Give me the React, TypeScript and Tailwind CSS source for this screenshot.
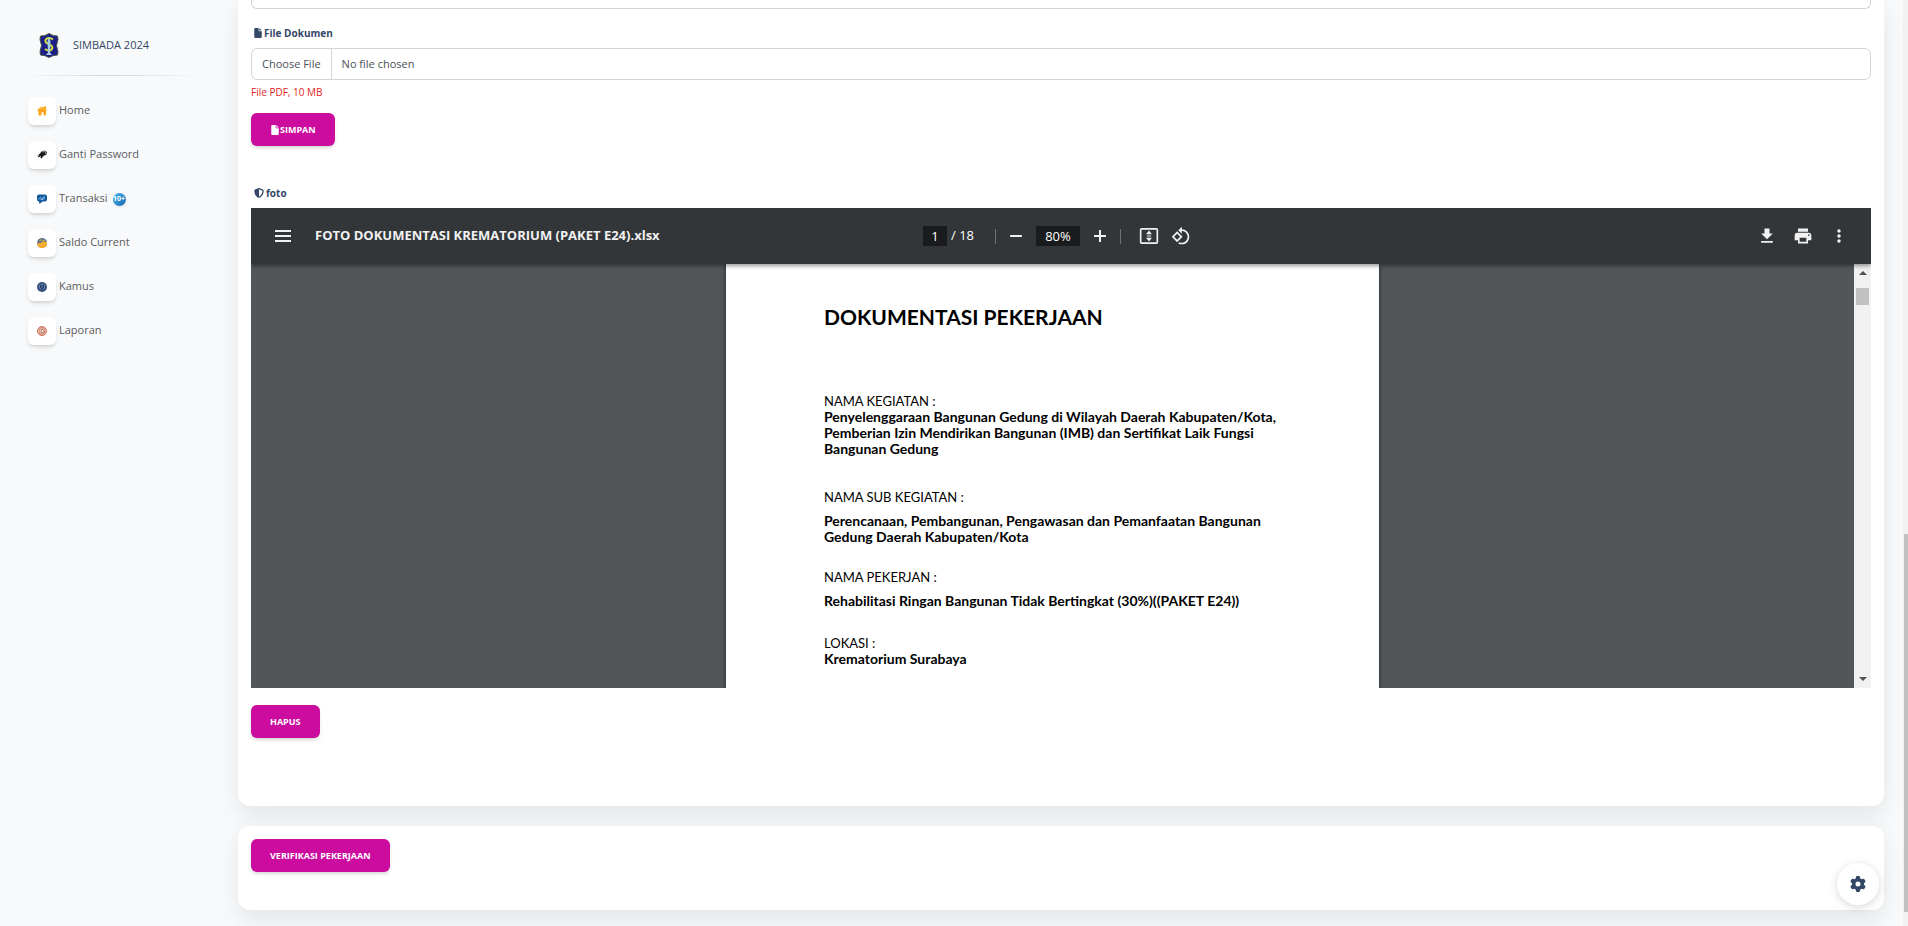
import React from "react";
import { FaFile, FaGear, FaShieldHalved } from "react-icons/fa6";

const HomeIcon = () => (
  <svg viewBox="0 0 20 20" className="size-[10px]" aria-hidden="true">
    <path d="M0 9 7.500 1.500 8.500 2 15 2v-1.500h3v5l2 4h-2v9h-5v-6h-4v6.500H3V11z" fill="#fba31c" />
    <path d="M0 9 7.500 1.500l12 7-11-3.500z" fill="#ffc14d" />
  </svg>
);

const KeyIcon = () => (
  <svg viewBox="0 0 20 20" className="size-[10px]" aria-hidden="true">
    <path d="M0 12 6 7l3-4 7-2 4 4-2 5-4 1-5 6-2-1 1-4-5 3-1-2 3-3z" fill="#1c1c1c" />
    <path d="m11 4 5-1 2 3-2 2" fill="none" stroke="#bbb" strokeWidth="1.500" />
  </svg>
);

const ChatIcon = () => (
  <svg viewBox="0 0 20 20" className="size-[10px]" aria-hidden="true">
    <path d="M4 1h12q4 0 4 4v6q0 4-4 4h-5l-6 5-1-5q-4 0-4-4V5q0-4 4-4z" fill="#155a9f" />
    <path d="m3 11 4-4 3 2 6-4M7 11h5l4-3" fill="none" stroke="#a8d4f5" strokeWidth="1.600" />
  </svg>
);

const BalanceIcon = () => (
  <svg viewBox="0 0 20 20" className="size-[10px]" aria-hidden="true">
    <circle cx="10" cy="10" r="10" fill="#56728c" />
    <path d="M0 9q4 2 7 1l5-3 8 1a10 10 0 0 1-19 6z" fill="#f3ab2e" />
    <path d="m5 7 3-4 3 3 3-2v4" fill="none" stroke="#d9b23c" strokeWidth="2" />
  </svg>
);

const DictionaryIcon = () => (
  <svg viewBox="0 0 20 20" className="size-[10px]" aria-hidden="true">
    <circle cx="10" cy="10" r="10" fill="#33507f" />
    <circle cx="10" cy="9" r="6" fill="#6b86b0" />
    <path d="M7 5v5q0 3 3 3t3-3V5M10 5v11" fill="none" stroke="#243c66" strokeWidth="2" />
  </svg>
);

const ReportIcon = () => (
  <svg viewBox="0 0 20 20" className="size-[10px]" aria-hidden="true">
    <circle cx="10" cy="10" r="9" fill="#ecc0ae" stroke="#cf6f5c" strokeWidth="2" />
    <path d="M6 4h8v12H6z" fill="#f8e6da" stroke="#c06a55" strokeWidth="1.500" />
    <path d="M8 7h4M8 10h2M8 13h4M13 9l2 4" fill="none" stroke="#a7523e" strokeWidth="1.500" />
  </svg>
);

const CityCrest = () => (
  <svg viewBox="0 0 40 50" className="h-[25px] w-5" aria-hidden="true">
    <path
      d="M3 6q8 1 17-5 9 6 17 5l1 7-3 12 3 12-1 7q-9 0-17 5-8-5-17-5l-1-7 3-12L2 13z"
      fill="#1b1f86"
      stroke="#4b5548"
      strokeWidth="2"
    />
    <path d="M28 13q-6-5-12-2-6 4-1 9 4 2 8 4 7 5 1 10-6 3-12-2" fill="none" stroke="#d3df3a" strokeWidth="4" />
    <path d="M20 7 23 17l-1 22 4 5H14l4-5-1-22z" fill="#a9cbe6" />
  </svg>
);

const menu = [
  { label: "Home", icon: <HomeIcon /> },
  { label: "Ganti Password", icon: <KeyIcon />, strong: true },
  { label: "Transaksi", icon: <ChatIcon />, badge: "10+" },
  { label: "Saldo Current", icon: <BalanceIcon /> },
  { label: "Kamus", icon: <DictionaryIcon /> },
  { label: "Laporan", icon: <ReportIcon /> },
];

function Sidebar() {
  return (
    <aside className="w-[238px] shrink-0 pt-[33px] pl-[22px]">
      <a href="#home" className="flex items-center gap-[14px] pl-[17px] text-[11px] font-medium text-[#344767]">
        <CityCrest />
        SIMBADA 2024
      </a>
      <div className="mt-[17px] h-px w-[178px] bg-linear-to-r from-transparent via-black/15 to-transparent" />
      <nav className="mt-[21px] pl-[6px]">
        <ul className="flex flex-col gap-4">
          {menu.map((item) => (
            <li key={item.label}>
              <a
                href={"#" + item.label.toLowerCase().replace(" ", "-")}
                className="flex h-7 items-center gap-[3px] text-[11px] text-[#5a5c60]"
              >
                <span className="flex size-7 items-center justify-center rounded-md bg-white shadow-[0_3px_5px_-1px_rgba(0,0,0,0.12),0_2px_3px_-1px_rgba(0,0,0,0.08)]">
                  {item.icon}
                </span>
                <span className={item.strong ? "pb-[2px] font-medium" : "pb-[2px]"}>{item.label}</span>
                {item.badge && (
                  <span className="ml-[2px] flex size-[13px] items-center justify-center rounded-full bg-linear-to-br from-[#49b3ee] to-[#1568b3] text-[7px] font-bold text-white shadow-sm">
                    {item.badge}
                  </span>
                )}
              </a>
            </li>
          ))}
        </ul>
      </nav>
    </aside>
  );
}

function PrimaryButton({ children }: { children: React.ReactNode }) {
  return (
    <button
      type="button"
      className="flex h-[33px] items-center rounded-md bg-[#cb0c9f] px-[19px] text-[9px] font-bold text-white uppercase shadow-[0_3px_5px_-1px_rgba(0,0,0,0.12),0_2px_3px_-1px_rgba(0,0,0,0.08)]"
    >
      {children}
    </button>
  );
}

function ToolButton({ label, children }: { label: string; children: React.ReactNode }) {
  return (
    <button type="button" aria-label={label} className="flex size-5 items-center justify-center">
      <svg viewBox="0 0 24 24" className="size-5 fill-[#f1f1f1]" aria-hidden="true">
        {children}
      </svg>
    </button>
  );
}

function PdfToolbar() {
  return (
    <div className="relative grid h-14 grid-cols-[1fr_auto_1fr] items-center bg-[#323639] px-[22px] text-[13px] text-[#f1f1f1] shadow-[0_2px_4px_rgba(0,0,0,0.4)]">
      <div className="flex items-center gap-[22px]">
        <ToolButton label="Menu">
          <path d="M2.400 19.200h19.200v-2.400H2.400zm0-6h19.200v-2.400H2.400zm0-8.400v2.400h19.200V4.800z" />
        </ToolButton>
        <h2 className="text-[13px] font-bold">FOTO DOKUMENTASI KREMATORIUM (PAKET E24).xlsx</h2>
      </div>
      <div className="flex items-center pr-2 text-white">
        <input aria-label="Page number" defaultValue="1" className="h-5 w-6 bg-[#191b1c] text-center" />
        <span className="ml-1 w-[26px]">/ 18</span>
        <span className="mr-[10px] ml-[18px] h-[15px] w-px bg-white/30" />
        <ToolButton label="Zoom out">
          <path d="M19 13.200H5v-2.400h14z" />
        </ToolButton>
        <input aria-label="Zoom" defaultValue="80%" className="mx-[10px] h-5 w-11 bg-[#191b1c] text-center" />
        <ToolButton label="Zoom in">
          <path d="M19.200 13.200h-6v6h-2.400v-6h-6v-2.400h6v-6h2.400v6h6z" />
        </ToolButton>
        <span className="mx-[10px] h-[15px] w-px bg-white/30" />
        <div className="flex gap-3 pl-2">
          <ToolButton label="Fit to page">
            <path
              d="M3 2.500h18q2 0 2 2v15q0 2-2 2H3q-2 0-2-2v-15q0-2 2-2zM3 4.500v15h18v-15zM12 5.500l3.600 4.300H8.400zM12 18.500l3.600-4.300H8.400zM9.500 11.300h5v1.400h-5z"
              fillRule="evenodd"
            />
          </ToolButton>
          <ToolButton label="Rotate counterclockwise">
            <path d="M7.340 6.410.860 12.900l6.490 6.480 6.490-6.480-6.500-6.490zM3.690 12.900l3.660-3.660L11 12.900l-3.660 3.660-3.650-3.660zm15.670-6.260A8.950 8.950 0 0 0 13 4V.760L8.760 5 13 9.240V6c1.790 0 3.580.680 4.950 2.050a7.007 7.007 0 0 1 0 9.900 6.973 6.973 0 0 1-7.790 1.440l-1.490 1.490C10.020 21.620 11.510 22 13 22c2.300 0 4.610-.880 6.360-2.640a8.980 8.980 0 0 0 0-12.720z" />
          </ToolButton>
        </div>
      </div>
      <div className="flex items-center justify-end gap-4">
        <ToolButton label="Download">
          <path d="M19 9h-4V3H9v6H5l7 7 7-7zM5 18v2h14v-2H5z" />
        </ToolButton>
        <ToolButton label="Print">
          <path d="M19 8H5c-1.660 0-3 1.340-3 3v6h4v4h12v-4h4v-6c0-1.660-1.340-3-3-3zm-3 11H8v-5h8v5zm3-7c-.550 0-1-.450-1-1s.450-1 1-1 1 .450 1 1-.450 1-1 1zm-1-9H6v4h12V3z" />
        </ToolButton>
        <ToolButton label="More actions">
          <path d="M12 8c1.100 0 2-.900 2-2s-.900-2-2-2-2 .900-2 2 .900 2 2 2zm0 2c-1.100 0-2 .900-2 2s.900 2 2 2 2-.900 2-2-.900-2-2-2zm0 6c-1.100 0-2 .900-2 2s.900 2 2 2 2-.900 2-2-.900-2-2-2z" />
        </ToolButton>
      </div>
    </div>
  );
}

function PdfViewer() {
  return (
    <section className="flex h-[480px] flex-col overflow-hidden bg-[#525659]">
      <div className="z-10">
        <PdfToolbar />
      </div>
      <div className="flex min-h-0 flex-1">
        <div className="min-w-0 flex-1">
          <article className="mx-auto h-full w-[653px] bg-white pt-[37px] pr-[80px] pl-[98px] font-[Lato,sans-serif] text-[14px] leading-4 text-black shadow-[0_0_4px_rgba(0,0,0,0.6)]">
            <h1 className="text-[21px] leading-8 font-bold">DOKUMENTASI PEKERJAAN</h1>
            <div className="mt-[60px]">
              <h3 className="text-[13px]">NAMA KEGIATAN :</h3>
              <p className="font-bold">
                Penyelenggaraan Bangunan Gedung di Wilayah Daerah Kabupaten/Kota,
                <br />
                Pemberian Izin Mendirikan Bangunan (IMB) dan Sertifikat Laik Fungsi
                <br />
                Bangunan Gedung
              </p>
            </div>
            <div className="mt-8">
              <h3 className="text-[13px]">NAMA SUB KEGIATAN :</h3>
              <p className="mt-2 font-bold">
                Perencanaan, Pembangunan, Pengawasan dan Pemanfaatan Bangunan
                <br />
                Gedung Daerah Kabupaten/Kota
              </p>
            </div>
            <div className="mt-6">
              <h3 className="text-[13px]">NAMA PEKERJAN :</h3>
              <p className="mt-2 font-bold">Rehabilitasi Ringan Bangunan Tidak Bertingkat (30%)((PAKET E24))</p>
            </div>
            <div className="mt-[26px]">
              <h3 className="text-[13px]">LOKASI :</h3>
              <p className="font-bold">Krematorium Surabaya</p>
            </div>
          </article>
        </div>
        <div className="flex w-[17px] flex-col items-center bg-[#f1f1f1] py-[7px]" aria-hidden="true">
          <svg viewBox="0 0 8 4" className="h-1 w-2 fill-[#505050]">
            <path d="M4 0 8 4H0z" />
          </svg>
          <div className="mt-[13px] h-[17px] w-[13px] bg-[#c1c1c1]" />
          <svg viewBox="0 0 8 4" className="mt-auto h-1 w-2 fill-[#505050]">
            <path d="M4 4 0 0h8z" />
          </svg>
        </div>
      </div>
    </section>
  );
}

export default function App() {
  return (
    <div className="flex min-h-screen overflow-hidden bg-[#f8f9fa] font-['Open_Sans',sans-serif]">
      <Sidebar />
      <main className="flex min-w-0 flex-1 flex-col gap-5 pr-[19px] pb-4">
        <section className="rounded-b-xl bg-white px-[13px] pb-[68px] shadow-[0_16px_22px_rgba(0,0,0,0.05),0_0_22px_rgba(0,0,0,0.04)]">
          <div className="h-[9px] rounded-b-md border border-t-0 border-[#d2d6da]" />
          <label htmlFor="dokumen" className="mt-4 flex items-center gap-px pl-[2px] text-[10px] leading-4 font-bold text-[#344767]">
            <FaFile className="size-[10px]" aria-hidden="true" />
            File Dokumen
          </label>
          <input
            id="dokumen"
            type="file"
            className="mt-[7px] block h-8 w-full rounded-md border border-[#d2d6da] bg-white text-[11px] leading-[30px] text-[#495057] file:mr-[10px] file:h-[30px] file:border-0 file:border-r file:border-solid file:border-[#d2d6da] file:px-[10px] file:text-[#495057]"
          />
          <p className="mt-1 text-[10px] leading-4 text-[#e11d1d]">File PDF, 10 MB</p>
          <div className="mt-[13px]">
            <PrimaryButton>
              <FaFile className="size-[10px]" aria-hidden="true" />
              Simpan
            </PrimaryButton>
          </div>
          <h2 className="mt-[39px] mb-[7px] flex items-center gap-[2px] pl-[3px] text-[10px] leading-4 font-bold text-[#344767]">
            <FaShieldHalved className="size-[10px]" aria-hidden="true" />
            foto
          </h2>
          <PdfViewer />
          <div className="mt-[17px]">
            <PrimaryButton>Hapus</PrimaryButton>
          </div>
        </section>
        <section className="rounded-xl bg-white px-[13px] pt-[13px] pb-[38px] shadow-[0_16px_22px_rgba(0,0,0,0.05),0_0_22px_rgba(0,0,0,0.04)]">
          <PrimaryButton>Verifikasi Pekerjaan</PrimaryButton>
        </section>
      </main>
      <div className="flex w-[5px] shrink-0 flex-col bg-[#f1f1f1] pb-[14px]" aria-hidden="true">
        <div className="flex-[534]" />
        <div className="ml-px flex-[378] bg-[#c1c1c1]" />
      </div>
      <button
        type="button"
        aria-label="Settings"
        className="fixed right-[29px] bottom-[21px] flex size-[42px] items-center justify-center rounded-full bg-white text-[#344767] shadow-[0_2px_10px_rgba(0,0,0,0.16)]"
      >
        <FaGear className="size-4" aria-hidden="true" />
      </button>
    </div>
  );
}
